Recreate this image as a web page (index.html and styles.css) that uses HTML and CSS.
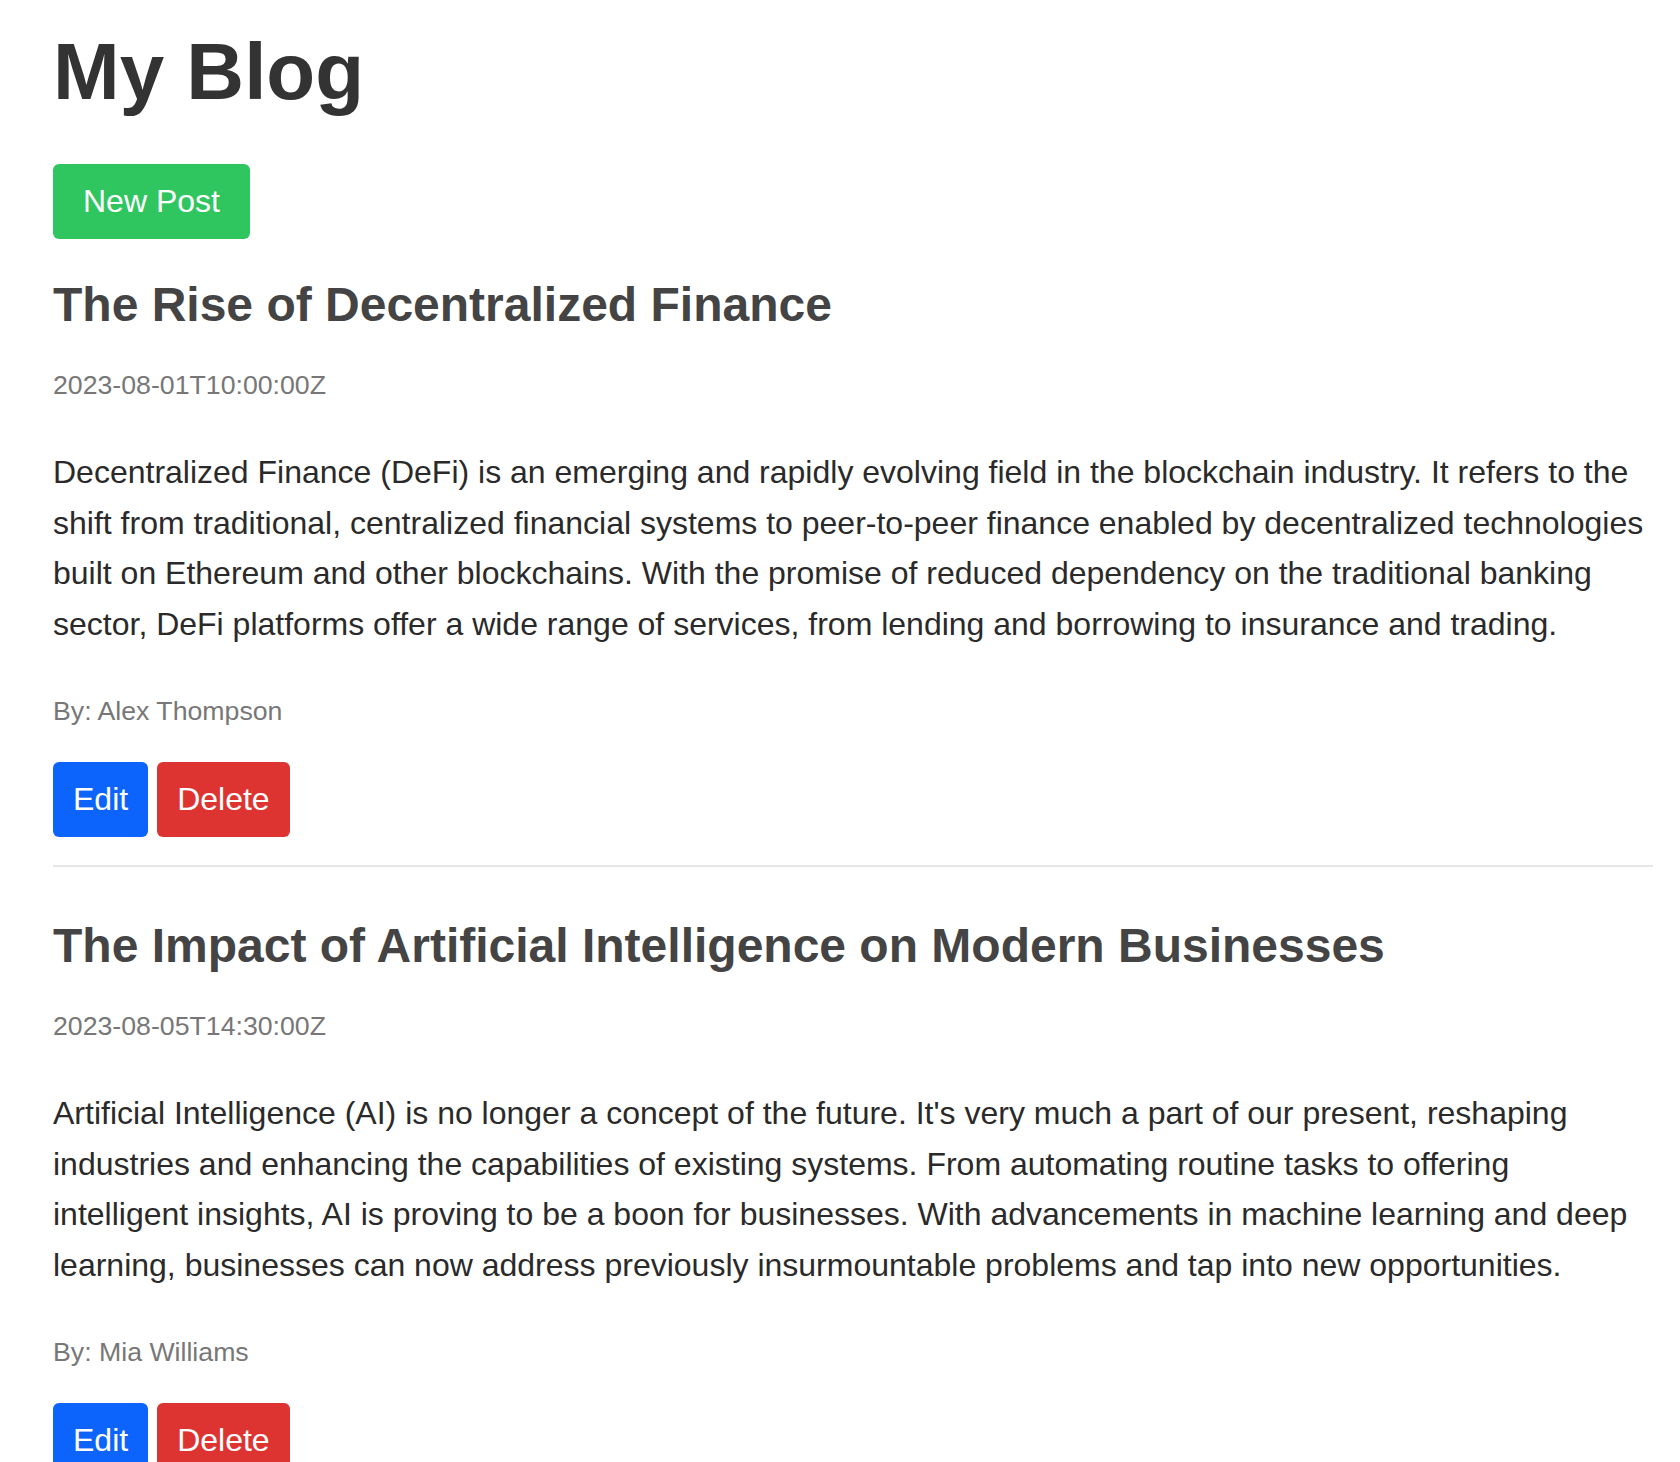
FILE: index.html
```html
<!DOCTYPE html>
<html lang="en">
<head>
<meta charset="utf-8">
<title>My Blog</title>
<link rel="stylesheet" href="styles.css">
</head>
<body>
<main class="page">
  <h1 class="site-title">My Blog</h1>
  <button class="btn btn-new">New Post</button>
  <section class="posts">
    <article class="post">
      <h2 class="post-title">The Rise of Decentralized Finance</h2>
      <p class="post-date">2023-08-01T10:00:00Z</p>
      <p class="post-body">Decentralized Finance (DeFi) is an emerging and rapidly evolving field in the blockchain industry. It refers to the shift from traditional, centralized financial systems to peer-to-peer finance enabled by decentralized technologies built on Ethereum and other blockchains. With the promise of reduced dependency on the traditional banking sector, DeFi platforms offer a wide range of services, from lending and borrowing to insurance and trading.</p>
      <p class="post-author">By: Alex Thompson</p>
      <div class="post-actions">
        <button class="btn btn-edit">Edit</button>
        <button class="btn btn-delete">Delete</button>
      </div>
    </article>
    <article class="post">
      <h2 class="post-title">The Impact of Artificial Intelligence on Modern Businesses</h2>
      <p class="post-date">2023-08-05T14:30:00Z</p>
      <p class="post-body">Artificial Intelligence (AI) is no longer a concept of the future. It's very much a part of our present, reshaping industries and enhancing the capabilities of existing systems. From automating routine tasks to offering intelligent insights, AI is proving to be a boon for businesses. With advancements in machine learning and deep learning, businesses can now address previously insurmountable problems and tap into new opportunities.</p>
      <p class="post-author">By: Mia Williams</p>
      <div class="post-actions">
        <button class="btn btn-edit">Edit</button>
        <button class="btn btn-delete">Delete</button>
      </div>
    </article>
  </section>
</main>
</body>
</html>
```

FILE: styles.css
```css
* {
  box-sizing: border-box;
}

html, body {
  margin: 0;
  padding: 0;
  background: #ffffff;
}

body {
  font-family: "Liberation Sans", Arial, Helvetica, sans-serif;
  color: #2a2a2a;
}

.page {
  padding: 26px 27px 0 53px;
}

.site-title {
  margin: 0 0 46px 0;
  font-size: 80px;
  line-height: 92px;
  font-weight: 700;
  color: #333333;
}

.btn {
  display: inline-block;
  border: none;
  border-radius: 6px;
  font-family: "Liberation Sans", Arial, Helvetica, sans-serif;
  font-size: 32px;
  line-height: 37px;
  color: #ffffff;
  padding: 19px 20px;
  cursor: pointer;
}

.btn-new {
  background: #2fc65f;
  padding: 19px 30px;
  margin-bottom: 38px;
}

.btn-edit {
  background: #0d64fd;
}

.btn-delete {
  background: #de3431;
}

.post {
  border-bottom: 2px solid #e6e6e6;
  padding-bottom: 28px;
  margin-bottom: 51px;
}

.post-title {
  margin: 0 0 38px 0;
  font-size: 48px;
  line-height: 55px;
  font-weight: 700;
  color: #444444;
}

.post-date {
  margin: 0 0 47px 0;
  font-size: 26.7px;
  line-height: 30px;
  color: #777777;
}

.post-body {
  margin: 0 0 46px 0;
  font-size: 32px;
  line-height: 50.7px;
  color: #2a2a2a;
}

.post-author {
  margin: 0 0 36px 0;
  font-size: 26.7px;
  line-height: 30px;
  color: #777777;
}

.post-actions {
  display: flex;
  gap: 9px;
}
```
